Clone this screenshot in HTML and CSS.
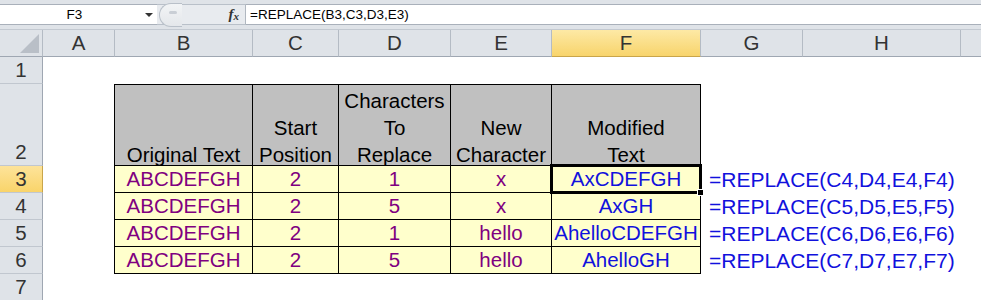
FILE: index.html
```html
<!DOCTYPE html>
<html lang="en">
<head>
    <meta charset="UTF-8">
    <title>REPLACE</title>
    <link rel="stylesheet" href="styles.css">
</head>
<body>
    <div class="fbar">
        <div class="namebox">
            <span class="ref">F3</span>
            <span class="drop"></span>
        </div>
        <div class="fx-area">
            <span class="knob"><span class="dash"></span></span>
            <span class="fx">f<sub>x</sub></span>
        </div>
        <div class="formula">=REPLACE(B3,C3,D3,E3)</div>
    </div>

    <div class="sheet">
        <!-- column headers -->
        <div class="corner"></div>
        <div class="colhead">A</div>
        <div class="colhead">B</div>
        <div class="colhead">C</div>
        <div class="colhead">D</div>
        <div class="colhead">E</div>
        <div class="colhead sel">F</div>
        <div class="colhead">G</div>
        <div class="colhead">H</div>
        <div class="colhead last"></div>

        <!-- row 1 -->
        <div class="rowhead">1</div>
        <div class="blank span9"></div>

        <!-- row 2 -->
        <div class="rowhead tall">2</div>
        <div class="blank"></div>
        <div class="cell head first top"><span>Original Text</span></div>
        <div class="cell head top"><span>Start<br>Position</span></div>
        <div class="cell head top"><span>Characters<br>To<br>Replace</span></div>
        <div class="cell head top"><span>New<br>Character</span></div>
        <div class="cell head top"><span>Modified<br>Text</span></div>
        <div class="blank span3"></div>

        <!-- row 3 -->
        <div class="rowhead sel">3</div>
        <div class="blank"></div>
        <div class="cell data first">ABCDEFGH</div>
        <div class="cell data">2</div>
        <div class="cell data">1</div>
        <div class="cell data">x</div>
        <div class="cell data result active">AxCDEFGH</div>
        <div class="note">=REPLACE(C4,D4,E4,F4)</div>

        <!-- row 4 -->
        <div class="rowhead">4</div>
        <div class="blank"></div>
        <div class="cell data first">ABCDEFGH</div>
        <div class="cell data">2</div>
        <div class="cell data">5</div>
        <div class="cell data">x</div>
        <div class="cell data result">AxGH</div>
        <div class="note">=REPLACE(C5,D5,E5,F5)</div>

        <!-- row 5 -->
        <div class="rowhead">5</div>
        <div class="blank"></div>
        <div class="cell data first">ABCDEFGH</div>
        <div class="cell data">2</div>
        <div class="cell data">1</div>
        <div class="cell data">hello</div>
        <div class="cell data result">AhelloCDEFGH</div>
        <div class="note">=REPLACE(C6,D6,E6,F6)</div>

        <!-- row 6 -->
        <div class="rowhead">6</div>
        <div class="blank"></div>
        <div class="cell data first">ABCDEFGH</div>
        <div class="cell data">2</div>
        <div class="cell data">5</div>
        <div class="cell data">hello</div>
        <div class="cell data result">AhelloGH</div>
        <div class="note">=REPLACE(C7,D7,E7,F7)</div>

        <!-- row 7 -->
        <div class="rowhead">7</div>
        <div class="blank span9"></div>
    </div>
</body>
</html>
```

FILE: styles.css
```css
body {
    margin: 0;
    background: #fff;
    font-family: "Liberation Sans", Arial, sans-serif;
    overflow: hidden;
}

/* formula bar */
.fbar {
    display: flex;
    height: 30px;
    box-sizing: border-box;
    padding: 4px 0 4px 0;
    background: #dfe3e8;
    border-bottom: 1px solid #c3c9d1;
}
.namebox {
    width: 157px;
    flex: none;
    background: #fff;
    border-top: 1px solid #a9b0ba;
    border-bottom: 1px solid #a9b0ba;
    display: flex;
    align-items: center;
    font-size: 13.5px;
    color: #000;
}
.ref {
    flex: 1;
    text-align: center;
    padding-left: 4px;
}
.drop {
    width: 0;
    height: 0;
    border-left: 4px solid transparent;
    border-right: 4px solid transparent;
    border-top: 4px solid #333;
    margin-right: 4px;
}
.fx-area {
    width: 88px;
    flex: none;
    display: flex;
    align-items: center;
    justify-content: space-between;
    background: #e8ebef;
    border-top: 1px solid #b9c0c9;
    border-bottom: 1px solid #b9c0c9;
    border-right: 1px solid #b0b7c0;
}
.knob {
    width: 22px;
    height: 22px;
    margin-left: 2px;
    border: 1px solid #b9c0c9;
    border-right: none;
    border-radius: 12px 0 0 12px;
    background: linear-gradient(#f2f4f6, #e4e7eb);
    display: flex;
    align-items: center;
    justify-content: center;
}
.dash {
    width: 8px;
    height: 3px;
    border-radius: 2px;
    background: #c9ced5;
    margin-top: -4px;
    margin-left: 4px;
}
.fx {
    font-family: "Liberation Serif", "Times New Roman", serif;
    font-style: italic;
    font-weight: bold;
    font-size: 15px;
    color: #333;
    margin-right: 6px;
}
.fx sub {
    font-size: 11px;
    vertical-align: -1px;
}
.formula {
    flex: 1;
    background: #fff;
    border-top: 1px solid #a9b0ba;
    border-bottom: 1px solid #a9b0ba;
    display: flex;
    align-items: center;
    padding-left: 4px;
    font-size: 13.5px;
    color: #000;
}

/* worksheet */
.sheet {
    display: grid;
    grid-template-columns: 43px 72px 138px 86px 112px 101px 149px 102px 158px 1fr;
    grid-template-rows: 27px 27px 82px 27px 27px 27px 27px 27px;
    font-size: 20.5px;
}
.sheet > div {
    box-sizing: border-box;
}
.corner {
    background: #dfe3e8;
    border-right: 1px solid #b4bbc4;
    border-bottom: 1px solid #9fa7b2;
    position: relative;
}
.corner::after {
    content: "";
    position: absolute;
    right: 3px;
    bottom: 3px;
    border-left: 19px solid transparent;
    border-bottom: 19px solid #b9bfc7;
}
.colhead {
    background: #dfe3e8;
    border-right: 1px solid #b4bbc4;
    border-bottom: 1px solid #9fa7b2;
    color: #333;
    display: flex;
    align-items: center;
    justify-content: center;
}
.colhead.sel {
    background: linear-gradient(#fde9a5, #f8d46c);
    border-bottom-color: #c9a54a;
}
.colhead.last {
    border-right: none;
}
.rowhead {
    background: #dfe3e8;
    border-right: 1px solid #9fa7b2;
    border-bottom: 1px solid #c1c7cf;
    color: #333;
    display: flex;
    align-items: center;
    justify-content: center;
}
.rowhead.tall {
    align-items: flex-end;
    padding-bottom: 1px;
}
.rowhead.sel {
    background: linear-gradient(#fde39a, #f9d46a);
    border-right-color: #c9a54a;
}
.blank {
    background: #fff;
}
.span9 { grid-column: span 9; }
.span3 { grid-column: span 3; }

.cell {
    border-right: 1px solid #000;
    border-bottom: 1px solid #000;
    display: flex;
    justify-content: center;
    text-align: center;
    white-space: nowrap;
}
.cell.first {
    border-left: 1px solid #000;
    margin-left: -1px;
}
.cell.top {
    border-top: 1px solid #000;
}
.head {
    background: #c0c0c0;
    color: #000;
    align-items: flex-end;
    line-height: 27px;
}
.head span {
    margin-bottom: -3px;
}
.data {
    background: #ffffcc;
    color: #800080;
    align-items: center;
}
.data.result {
    color: #1111dd;
}
.active {
    position: relative;
}
.active::before {
    content: "";
    position: absolute;
    left: -2px;
    top: -2px;
    right: -2px;
    bottom: -2px;
    border: 3px double #000;
}
.active::after {
    content: "";
    position: absolute;
    right: -4px;
    bottom: -4px;
    width: 5px;
    height: 5px;
    background: #000;
    border: 1px solid #fff;
    z-index: 2;
}
.note {
    grid-column: span 3;
    color: #1111dd;
    font-size: 21px;
    white-space: nowrap;
    padding-left: 8px;
    display: flex;
    align-items: center;
}
```
